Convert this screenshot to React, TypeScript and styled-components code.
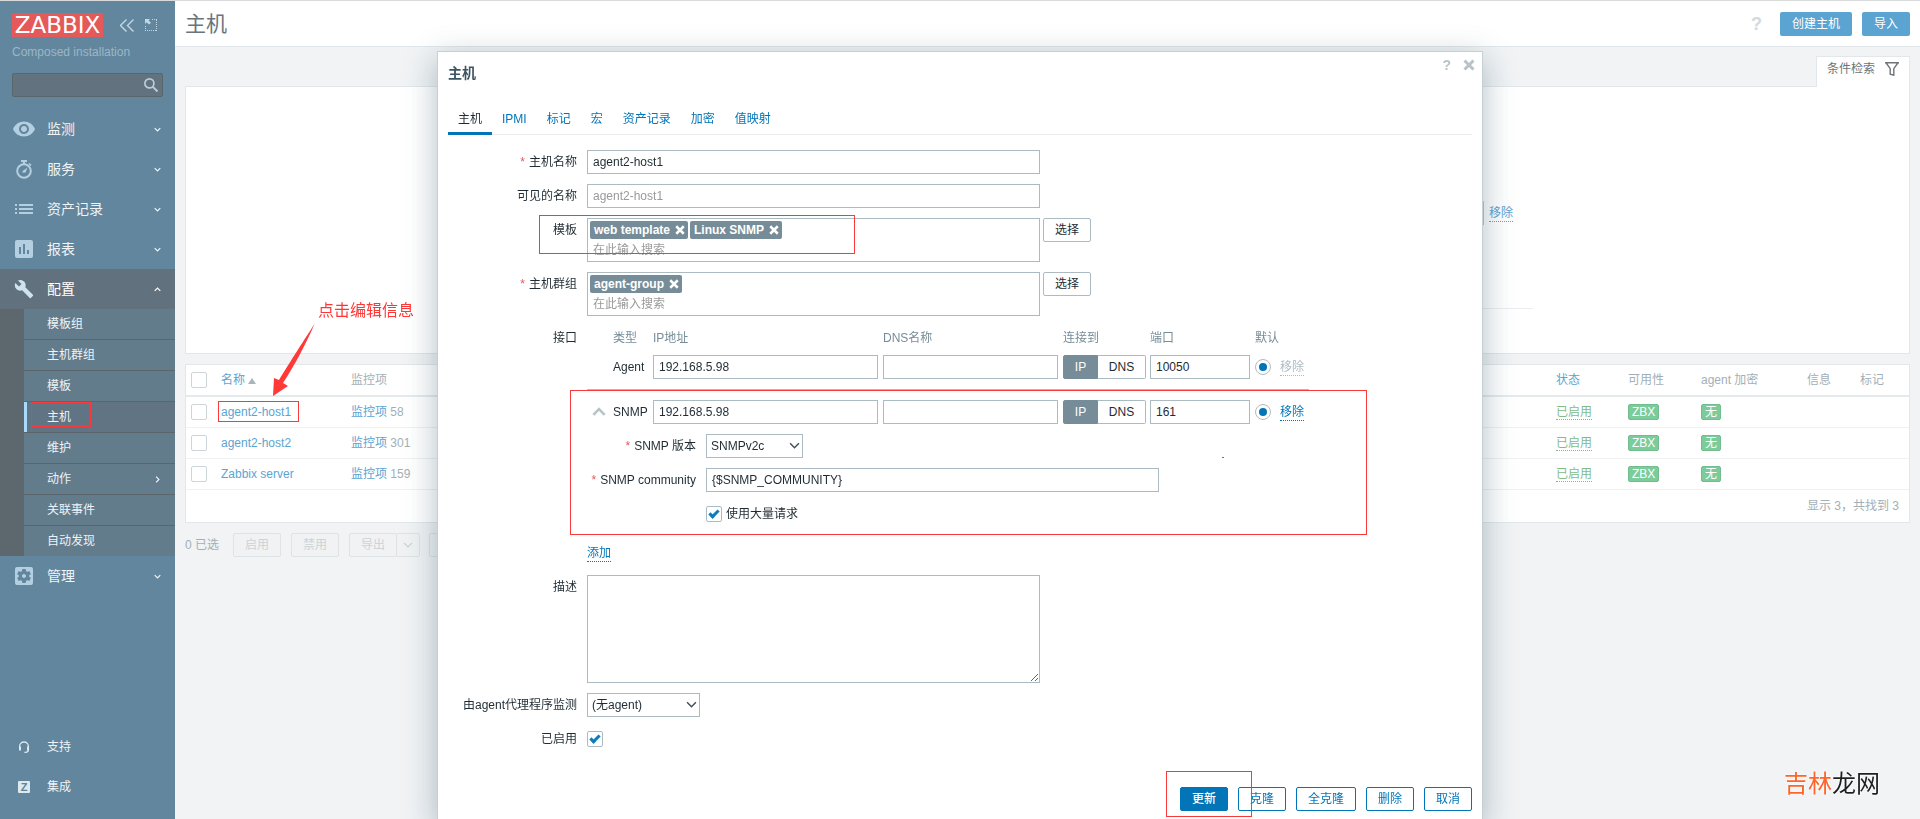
import React from "react";
import styled, { createGlobalStyle, css } from "styled-components";
import {
  MdVisibility,
  MdAssessment,
  MdBuild,
  MdSettingsApplications,
} from "react-icons/md";

const font = '"Liberation Sans", "Noto Sans CJK SC", sans-serif';

const GlobalStyle = createGlobalStyle`
  *, *::before, *::after { box-sizing: border-box; }
  body {
    margin: 0;
    overflow: hidden;
    background: #f1f3f5;
    font: 12px/16px ${font};
    color: #1f2c33;
  }
  button, input, select, textarea { font: inherit; color: inherit; margin: 0; }
  a { text-decoration: none; }
`;

/* ---------- shell and sidebar ---------- */

const Shell = styled.div`
  display: flex;
  height: 100vh;
  min-height: 640px;
  border-top: 1px solid #d9dadb;
`;

const Sidebar = styled.aside`
  display: flex;
  flex-direction: column;
  flex: none;
  width: 175px;
  padding: 12px 0;
  background: #62869d;
  color: #f0f5f8;
`;

const Brand = styled.div`
  display: flex;
  align-items: center;
  gap: 11px;
  padding: 0 18px 0 12px;
`;

const Logo = styled.a`
  flex: none;
  width: 91px;
  height: 24px;
  margin-right: 6px;
  background: #e45959;
  color: #fff;
  text-align: center;
  font: 23px/24px "DejaVu Sans", sans-serif;
`;

const IconButton = styled.button<{ $muted?: boolean }>`
  display: flex;
  padding: 0;
  border: 0;
  background: none;
  color: ${(p) => (p.$muted ? "#b7c3c9" : "#c3d7e4")};
`;

const ServerName = styled.div`
  padding: 7px 12px 13px;
  color: #9ab7c9;
`;

const SearchBox = styled.form`
  display: flex;
  align-items: center;
  height: 24px;
  margin: 0 12px 12px;
  padding-right: 4px;
  border: 1px solid #5a656c;
  border-radius: 2px;
  background: #62737f;
  color: #b8cddb;

  input {
    flex: 1;
    min-width: 0;
    border: 0;
    background: none;
    outline: 0;
  }
`;

const MenuLink = styled.a<{ $open?: boolean }>`
  display: flex;
  align-items: center;
  height: 40px;
  padding: 0 14px 0 12px;
  font-size: 14px;
  color: ${(p) => (p.$open ? "#fff" : "#eef4f8")};
  background: ${(p) => (p.$open ? "#61727e" : "none")};

  span {
    flex: 1;
  }
`;

const MenuIcon = styled.i`
  display: flex;
  justify-content: center;
  width: 24px;
  margin-right: 11px;
  color: #b4cfe1;
`;

const SubMenu = styled.ul`
  margin: 0;
  padding: 0 0 0 24px;
  list-style: none;
  background: #5c676e;
`;

const SubItem = styled.li`
  position: relative;
  background: #637c8c;

  & + & {
    border-top: 1px solid #5a656c;
  }
`;

const SubLink = styled.a<{ $active?: boolean }>`
  display: flex;
  align-items: center;
  justify-content: space-between;
  height: 30px;
  padding: 0 14px 0 20px;
  border-left: 3px solid ${(p) => (p.$active ? "#a9d9fb" : "transparent")};
  background: ${(p) => (p.$active ? "#607483" : "none")};
  color: #edf3f6;
`;

const SideFooter = styled.nav`
  margin-top: auto;
`;

const FooterLink = styled(MenuLink)`
  font-size: 12px;
`;

const ZMark = styled.b`
  width: 12px;
  height: 12px;
  border-radius: 1px;
  background: #dde8ef;
  color: #5f839b;
  text-align: center;
  font: bold 11px/12px "Liberation Sans", sans-serif;
`;

/* ---------- page behind the dialogue ---------- */

const Main = styled.main`
  flex: 1;
  min-width: 0;
`;

const PageHeader = styled.header`
  display: flex;
  align-items: center;
  height: 46px;
  padding: 0 10px;
  border-bottom: 1px solid #e1e7ea;
  background: #fff;

  h1 {
    flex: 1;
    margin: 0;
    font-weight: 400;
    font-size: 21px;
    line-height: 24px;
    color: #68757d;
  }
`;

const HelpLink = styled.a<{ $small?: boolean }>`
  font-weight: 700;
  font-size: ${(p) => (p.$small ? 14 : 18)}px;
  color: ${(p) => (p.$small ? "#b7c3c9" : "#d1d9dd")};
  margin-right: ${(p) => (p.$small ? 12 : 8)}px;
`;

const PageButton = styled.button`
  height: 24px;
  padding: 0 12px;
  margin-left: 10px;
  border: 0;
  border-radius: 2px;
  background: #5ba4d2;
  color: #fff;
`;

const Content = styled.div`
  padding: 9px 10px;
`;

const FilterTab = styled.a`
  position: relative;
  z-index: 1;
  display: flex;
  align-items: center;
  justify-content: space-between;
  width: 94px;
  height: 31px;
  margin: 0 0 -1px auto;
  padding: 0 10px 6px;
  border: 1px solid #e1e7ea;
  border-bottom: 0;
  background: #fff;
  color: #6b757b;
`;

const Panel = styled.section`
  border: 1px solid #e1e7ea;
  background: #fff;
`;

const FilterPanel = styled(Panel)`
  height: 268px;
  margin-bottom: 10px;
`;

const FilterForm = styled.div`
  display: flex;
  align-items: center;
  justify-content: flex-end;
  max-width: 971px;
  height: 222px;
  margin: 0 auto;
  padding: 31px 20px 0;
  border-bottom: 1px solid #ebeef0;

  input {
    width: 200px;
    height: 24px;
    margin-right: 5px;
    border: 1px solid #bfcad0;
  }
`;

const dotted = css`
  border-bottom: 1px dotted currentColor;
`;

const PageLink = styled.a<{ $dotted?: boolean }>`
  color: #5ba4d2;
  ${(p) => p.$dotted && dotted}
`;

const HostTable = styled.table`
  width: 100%;
  border-collapse: collapse;
  table-layout: fixed;
  color: #a3afb6;

  th,
  td {
    height: 31px;
    padding: 0 5px;
    text-align: left;
    font-weight: 400;
    border-bottom: 1px solid #eff1f3;
  }
  th {
    border-bottom: 2px solid #e5eaed;
  }
  tfoot td {
    height: 33px;
    text-align: right;
    padding-right: 10px;
    border: 0;
  }
`;

const Col = styled.col<{ $w?: number }>`
  width: ${(p) => (p.$w ? `${p.$w}px` : "auto")};
`;

const SortArrow = styled.i`
  display: inline-block;
  margin-left: 3px;
  border: 4px solid transparent;
  border-top: 0;
  border-bottom: 6px solid #a9b5bc;
`;

const StatusLink = styled.a`
  color: #83bb86;
  ${dotted}
`;

const Badge = styled.span`
  display: inline-block;
  height: 16px;
  padding: 0 3px;
  border: 1px solid #72bd8e;
  border-radius: 2px;
  background: #7ccb9a;
  color: #fff;
  line-height: 14px;
`;

const ActionBar = styled.div`
  display: flex;
  align-items: center;
  margin-top: 10px;
  color: #a3afb6;

  span {
    width: 48px;
  }
`;

const ActionButton = styled.button<{ $joined?: boolean }>`
  display: flex;
  align-items: center;
  height: 24px;
  padding: 0 ${(p) => (p.$joined ? 6 : 11)}px;
  margin-right: ${(p) => (p.$joined ? 9 : 10)}px;
  margin-left: ${(p) => (p.$joined ? -11 : 0)}px;
  border: 1px solid #dde3e6;
  border-radius: 2px;
  background: #f0f2f3;

  &:disabled {
    color: #ccd4d8;
  }
`;

const Watermark = styled.div`
  position: fixed;
  right: 40px;
  bottom: 19px;
  font-size: 24px;
  line-height: 32px;
  color: #1f1f1f;
  text-shadow: 0 0 2px #fff, 0 0 2px #fff;

  b {
    font-weight: 400;
    color: #ff6428;
  }
`;

/* ---------- form controls ---------- */

const Tick = styled.input.attrs({ type: "checkbox" })<{ $pale?: boolean }>`
  appearance: none;
  position: relative;
  display: block;
  flex: none;
  width: 16px;
  height: 16px;
  border: 1px solid ${(p) => (p.$pale ? "#ccd5da" : "#acbbc2")};
  border-radius: 2px;
  background: #fff;

  &:checked::after {
    content: "";
    position: absolute;
    left: 2px;
    top: 3px;
    width: 10px;
    height: 6px;
    border: solid #0f7cbd;
    border-width: 0 0 3px 3px;
    transform: rotate(-45deg);
  }
`;

const Radio = styled.input.attrs({ type: "radio" })`
  appearance: none;
  display: flex;
  align-items: center;
  justify-content: center;
  width: 16px;
  height: 16px;
  border: 1px solid #acbbc2;
  border-radius: 50%;
  background: #fff;

  &:checked::before {
    content: "";
    width: 8px;
    height: 8px;
    border-radius: 50%;
    background: #0275b8;
  }
`;

const TextInput = styled.input<{ $w?: number }>`
  width: ${(p) => p.$w ?? 453}px;
  height: 24px;
  padding: 0 5px;
  border: 1px solid #acbbc2;
  background: #fff;
  outline: 0;

  &::placeholder {
    color: #9a9a9a;
  }
`;

const TextArea = styled.textarea`
  display: block;
  width: 453px;
  height: 108px;
  border: 1px solid #acbbc2;
`;

const SelectWrap = styled.span<{ $w: number }>`
  position: relative;
  display: block;
  width: ${(p) => p.$w}px;

  select {
    appearance: none;
    display: block;
    width: 100%;
    height: 24px;
    padding: 0 4px;
    border: 1px solid #acbbc2;
    border-radius: 0;
    background: #fff;
  }
  svg {
    position: absolute;
    right: 3px;
    top: 6px;
    color: #3f4d55;
    pointer-events: none;
  }
`;

const Button = styled.button<{ $kind?: "primary" | "outline" }>`
  height: 24px;
  padding: 0 11px;
  border: 1px solid ${(p) => (p.$kind ? "#0275b8" : "#acbbc2")};
  border-radius: 2px;
  background: ${(p) => (p.$kind === "primary" ? "#0275b8" : "#fff")};
  color: ${(p) =>
    p.$kind === "primary" ? "#fff" : p.$kind ? "#0275b8" : "#1f2c33"};
  font-weight: ${(p) => (p.$kind === "primary" ? 500 : 400)};
`;

const TextButton = styled.button`
  padding: 1px 0 0;
  border: 0;
  background: none;
  line-height: 15px;
  color: #0275b8;
  ${dotted}

  &:disabled {
    color: #acbbc2;
  }
`;

/* ---------- host dialogue ---------- */

const Overlay = styled.div`
  position: fixed;
  inset: 0;
  display: flex;
  justify-content: center;
  align-items: flex-start;
  padding-top: 51px;
  overflow: hidden;
`;

const Dialog = styled.section`
  position: relative;
  width: 1046px;
  padding: 13px 10px 10px;
  border: 1px solid #c5d0d5;
  background: #fff;
  box-shadow: 0 8px 30px rgba(40, 75, 92, 0.36);

  h2 {
    margin: 0;
    font-weight: 700;
    font-size: 14px;
    line-height: 16px;
    color: #3c5563;
  }
`;

const DialogTools = styled.div`
  position: absolute;
  top: 5px;
  right: 7px;
  display: flex;
  align-items: center;
`;

const Tabs = styled.nav`
  display: flex;
  margin: 24px 0 15px;
  border-bottom: 1px solid #ebeef0;
`;

const Tab = styled.a<{ $active?: boolean }>`
  height: 30px;
  margin-bottom: -1px;
  padding: 6px 10px 0;
  border-bottom: 3px solid ${(p) => (p.$active ? "#0275b8" : "transparent")};
  color: ${(p) => (p.$active ? "#1f2c33" : "#0275b8")};
`;

const FormGrid = styled.form`
  display: grid;
  grid-template-columns: 129px 1fr;
  gap: 10px;
`;

const Label = styled.label<{ $required?: boolean }>`
  line-height: 24px;
  text-align: right;

  ${(p) =>
    p.$required &&
    css`
      &::before {
        content: "*";
        margin-right: 4px;
        color: #e45959;
      }
    `}
`;

const FieldRow = styled.div`
  position: relative;
  display: flex;
  align-items: flex-start;
  gap: 3px;
`;

const CheckRow = styled.div`
  display: flex;
  align-items: center;
  gap: 4px;
  height: 24px;
`;

const MultiSelect = styled.div`
  width: 453px;
  height: 44px;
  padding: 2px;
  border: 1px solid #acbbc2;

  input {
    display: block;
    width: 100%;
    height: 20px;
    padding: 2px 3px 0;
    border: 0;
    outline: 0;
  }
  input::placeholder {
    color: #9a9a9a;
  }
`;

const Chips = styled.div`
  display: flex;
  gap: 2px;
`;

const Chip = styled.span`
  display: flex;
  align-items: center;
  gap: 5px;
  height: 18px;
  padding: 0 3px 0 4px;
  border-radius: 2px;
  background: #768d99;
  color: #fff;
  font-weight: 700;

  button {
    display: flex;
    padding: 0;
    border: 0;
    background: none;
  }
`;

const InterfaceRow = styled.div<{ $head?: boolean }>`
  display: grid;
  grid-template-columns: 26px 40px 230px 180px 87px 105px 25px auto;
  align-items: center;
  justify-content: start;
  width: 722px;
  height: 24px;
  white-space: nowrap;
  ${(p) =>
    p.$head &&
    css`
      margin-bottom: 5px;
      color: #768d99;
    `}
`;

const Expander = styled.button`
  display: flex;
  padding: 0;
  margin-left: 5px;
  border: 0;
  background: none;
  color: #b7c3c9;
`;

const Segmented = styled.div`
  display: flex;
  width: 83px;

  button {
    height: 24px;
    padding: 0;
    border: 1px solid #acbbc2;
  }
  button:first-child {
    width: 35px;
    border-color: #768d99;
    border-radius: 2px 0 0 2px;
    background: #768d99;
    color: #fff;
  }
  button:last-child {
    flex: 1;
    border-left: 0;
    border-radius: 0 2px 2px 0;
    background: #fff;
  }
`;

const SnmpBlock = styled.div`
  position: relative;
  width: 722px;
  margin-top: 10px;
  padding: 10px 0 15px;
  border-top: 1px solid #acbbc2;
`;

const SnmpGrid = styled.div`
  display: grid;
  grid-template-columns: 109px 1fr;
  gap: 10px;
  margin-top: 10px;
`;

const AddRow = styled.div`
  display: flex;
  align-items: center;
  height: 24px;
`;

const DialogFooter = styled.footer`
  display: flex;
  justify-content: flex-end;
  gap: 10px;
  margin-top: 36px;
`;

/* ---------- annotations ---------- */

const Marker = styled.span<{ $inset: string }>`
  position: absolute;
  inset: ${(p) => p.$inset};
  border: 1px solid #f93a3a;
  pointer-events: none;
`;

const Anchor = styled.span`
  position: relative;
`;

const RedDot = styled.i`
  position: absolute;
  left: 635px;
  top: 67px;
  width: 2px;
  height: 1px;
  background: #f93a3a;
`;

const Note = styled.div`
  position: fixed;
  left: 273px;
  top: 300px;
  padding-left: 45px;
  font-size: 16px;
  line-height: 22px;
  color: #ff3636;

  svg {
    position: absolute;
    left: 0;
    top: 24px;
  }
`;

/* ---------- small drawings ---------- */

type ChevronProps = { dir?: "down" | "up" | "right"; size?: number; stroke?: number };

const Chevron = ({ dir = "down", size = 7, stroke = 1.2 }: ChevronProps) => {
  const d = { down: "M1 3l4 4 4-4", up: "M1 7l4-4 4 4", right: "M3 1l4 4-4 4" }[dir];
  return (
    <svg width={size} height={size} viewBox="0 0 10 10" overflow="visible" aria-hidden="true">
      <path d={d} fill="none" stroke="currentColor" strokeWidth={(stroke * 10) / size} />
    </svg>
  );
};

const Cross = ({ size = 8 }: { size?: number }) => (
  <svg width={size} height={size} viewBox="0 0 8 8" aria-hidden="true">
    <path d="M1 1l6 6M7 1l-6 6" stroke="currentColor" strokeWidth="2" />
  </svg>
);

const Stopwatch = () => (
  <svg width="18" height="20" viewBox="0 0 18 20" fill="none" stroke="currentColor">
    <circle cx="9" cy="12" r="6.8" strokeWidth="2" />
    <path d="M6 2h6M9 2v3" strokeWidth="2.2" />
    <path d="M14 4.5l2 2" strokeWidth="1.6" />
    <path d="M12.5 8.5l-2 5-2.6.3-.6-1.6z" fill="currentColor" stroke="none" />
  </svg>
);

const ListIcon = () => (
  <svg width="18" height="10" viewBox="0 0 18 10" fill="currentColor">
    <path d="M0 0h2v2H0zM4 0h14v2H4zM0 4h2v2H0zM4 4h14v2H4zM0 8h2v2H0zM4 8h14v2H4z" />
  </svg>
);

const Headset = () => (
  <svg width="12" height="12" viewBox="0 0 12 12" fill="none" stroke="#dde8ef">
    <path d="M1.6 7V5.4a4.4 4.4 0 018.800 0V7" strokeWidth="1.3" />
    <path d="M2 5.5v4M10 5.5v4" strokeWidth="2" />
    <path d="M10.4 9c0 1.6-1.4 2.4-4 2.4" strokeWidth="1.3" />
  </svg>
);

/* ---------- data ---------- */

const upperMenu = [
  { label: "监测", icon: <MdVisibility size={24} /> },
  { label: "服务", icon: <Stopwatch /> },
  { label: "资产记录", icon: <ListIcon /> },
  { label: "报表", icon: <MdAssessment size={24} /> },
];

const configMenu = ["模板组", "主机群组", "模板", "主机", "维护", "动作", "关联事件", "自动发现"];

const hosts = [
  { name: "agent2-host1", items: 58 },
  { name: "agent2-host2", items: 301 },
  { name: "Zabbix server", items: 159 },
];

const tabs = ["主机", "IPMI", "标记", "宏", "资产记录", "加密", "值映射"];

const InterfaceFields = ({ type, port, locked }: { type: string; port: string; locked?: boolean }) => (
  <InterfaceRow>
    {locked ? (
      <span />
    ) : (
      <Expander type="button" aria-label="收起">
        <Chevron dir="up" size={14} stroke={2.6} />
      </Expander>
    )}
    <span>{type}</span>
    <TextInput $w={225} defaultValue="192.168.5.98" aria-label={`${type} IP地址`} />
    <TextInput $w={175} aria-label={`${type} DNS名称`} />
    <Segmented>
      <button type="button">IP</button>
      <button type="button">DNS</button>
    </Segmented>
    <TextInput $w={100} defaultValue={port} aria-label={`${type} 端口`} />
    <Radio name={`default-${type}`} defaultChecked aria-label={`${type} 默认`} />
    <TextButton type="button" disabled={locked}>移除</TextButton>
  </InterfaceRow>
);

const Chosen = ({ id, names }: { id: string; names: string[] }) => (
  <MultiSelect>
    <Chips>
      {names.map((name) => (
        <Chip key={name}>
          {name}
          <button type="button" aria-label="移除">
            <Cross size={10} />
          </button>
        </Chip>
      ))}
    </Chips>
    <input id={id} placeholder="在此输入搜索" />
  </MultiSelect>
);

export default function App() {
  return (
    <>
      <GlobalStyle />
      <Shell>
        <Sidebar>
          <Brand>
            <Logo href="#">ZABBIX</Logo>
            <IconButton aria-label="收起侧栏">
              <svg width="14" height="13" viewBox="0 0 14 13" fill="none" stroke="currentColor" strokeWidth="1.4">
                <path d="M6.5.5l-6 6 6 6M13.5.5l-6 6 6 6" />
              </svg>
            </IconButton>
            <IconButton aria-label="隐藏侧栏">
              <svg width="12" height="12" viewBox="0 0 12 12" fill="none" stroke="currentColor">
                <path d="M7 .5h5M11.5 1v11M.5 7v5M0 11.5h12" strokeDasharray="1 1" />
                <path d="M0 0h5L3.6 1.4 6 3.8 4 5.6 1.5 3.3 0 5z" fill="currentColor" stroke="none" />
              </svg>
            </IconButton>
          </Brand>
          <ServerName>Composed installation</ServerName>
          <SearchBox>
            <input aria-label="搜索" />
            <svg width="14" height="14" viewBox="0 0 14 14" fill="none" stroke="currentColor" strokeWidth="1.7">
              <circle cx="5.4" cy="5.4" r="4.5" />
              <path d="M8.6 8.6l4.9 4.9" strokeWidth="2" />
            </svg>
          </SearchBox>
          <nav>
            {upperMenu.map((m) => (
              <MenuLink key={m.label} href="#">
                <MenuIcon>{m.icon}</MenuIcon>
                <span>{m.label}</span>
                <Chevron />
              </MenuLink>
            ))}
            <MenuLink href="#" $open>
              <MenuIcon>
                <MdBuild size={20} color="#cfe2ef" />
              </MenuIcon>
              <span>配置</span>
              <Chevron dir="up" />
            </MenuLink>
            <SubMenu>
              {configMenu.map((label) => (
                <SubItem key={label}>
                  <SubLink href="#" $active={label === "主机"}>
                    {label}
                    {label === "动作" && <Chevron dir="right" />}
                  </SubLink>
                  {label === "主机" && <Marker $inset="0 84px 5px 7px" />}
                </SubItem>
              ))}
            </SubMenu>
            <MenuLink href="#">
              <MenuIcon>
                <MdSettingsApplications size={24} />
              </MenuIcon>
              <span>管理</span>
              <Chevron />
            </MenuLink>
          </nav>
          <SideFooter>
            <FooterLink href="#">
              <MenuIcon>
                <Headset />
              </MenuIcon>
              <span>支持</span>
            </FooterLink>
            <FooterLink href="#">
              <MenuIcon>
                <ZMark>Z</ZMark>
              </MenuIcon>
              <span>集成</span>
            </FooterLink>
          </SideFooter>
        </Sidebar>

        <Main>
          <PageHeader>
            <h1>主机</h1>
            <HelpLink href="#">?</HelpLink>
            <PageButton>创建主机</PageButton>
            <PageButton>导入</PageButton>
          </PageHeader>
          <Content>
            <FilterTab href="#">
              条件检索
              <svg width="14" height="14" viewBox="0 0 14 14" fill="none" stroke="currentColor" strokeWidth="1.4">
                <path d="M0 .8h14M1.2 1l4 5.600v5.600l3.600 1V6.600l4-5.600" />
              </svg>
            </FilterTab>
            <FilterPanel>
              <FilterForm>
                <input aria-label="标记值" />
                <PageLink href="#" $dotted>移除</PageLink>
              </FilterForm>
            </FilterPanel>
            <Panel>
              <HostTable>
                <colgroup>
                  <Col $w={30} />
                  <Col $w={130} />
                  <Col />
                  <Col $w={72} />
                  <Col $w={73} />
                  <Col $w={106} />
                  <Col $w={53} />
                  <Col $w={54} />
                </colgroup>
                <thead>
                  <tr>
                    <th><Tick $pale aria-label="全选" /></th>
                    <th><PageLink href="#">名称</PageLink><SortArrow /></th>
                    <th>监控项</th>
                    <th><PageLink href="#">状态</PageLink></th>
                    <th>可用性</th>
                    <th>agent 加密</th>
                    <th>信息</th>
                    <th>标记</th>
                  </tr>
                </thead>
                <tbody>
                  {hosts.map((h, i) => (
                    <tr key={h.name}>
                      <td><Tick $pale aria-label={h.name} /></td>
                      <td>
                        <Anchor>
                          <PageLink href="#">{h.name}</PageLink>
                          {i === 0 && <Marker $inset="-4px -8px -3px -3px" />}
                        </Anchor>
                      </td>
                      <td><PageLink href="#">监控项</PageLink> {h.items}</td>
                      <td><StatusLink href="#">已启用</StatusLink></td>
                      <td><Badge>ZBX</Badge></td>
                      <td><Badge>无</Badge></td>
                      <td />
                      <td />
                    </tr>
                  ))}
                </tbody>
                <tfoot>
                  <tr>
                    <td colSpan={8}>显示 3，共找到 3</td>
                  </tr>
                </tfoot>
              </HostTable>
            </Panel>
            <ActionBar>
              <span>0 已选</span>
              <ActionButton disabled>启用</ActionButton>
              <ActionButton disabled>禁用</ActionButton>
              <ActionButton disabled>导出</ActionButton>
              <ActionButton disabled $joined aria-label="导出格式">
                <Chevron size={10} />
              </ActionButton>
              <ActionButton disabled>批量更新</ActionButton>
            </ActionBar>
          </Content>
        </Main>
      </Shell>

      <Watermark><b>吉林</b>龙网</Watermark>

      <Overlay>
        <Dialog role="dialog" aria-label="主机">
          <DialogTools>
            <HelpLink href="#" $small>?</HelpLink>
            <IconButton $muted aria-label="关闭">
              <Cross size={12} />
            </IconButton>
          </DialogTools>
          <h2>主机</h2>
          <Tabs>
            {tabs.map((t, i) => (
              <Tab key={t} href="#" $active={i === 0}>{t}</Tab>
            ))}
          </Tabs>

          <FormGrid>
            <Label $required htmlFor="host">主机名称</Label>
            <FieldRow><TextInput id="host" defaultValue="agent2-host1" /></FieldRow>

            <Label htmlFor="visible">可见的名称</Label>
            <FieldRow><TextInput id="visible" placeholder="agent2-host1" /></FieldRow>

            <Label htmlFor="templates">模板</Label>
            <FieldRow>
              <Chosen id="templates" names={["web template", "Linux SNMP"]} />
              <Button type="button">选择</Button>
              <Marker $inset="-3px 617px 8px -48px" />
            </FieldRow>

            <Label $required htmlFor="groups">主机群组</Label>
            <FieldRow>
              <Chosen id="groups" names={["agent-group"]} />
              <Button type="button">选择</Button>
            </FieldRow>

            <Label as="span">接口</Label>
            <div>
              <InterfaceRow $head>
                <span />
                <span>类型</span>
                <span>IP地址</span>
                <span>DNS名称</span>
                <span>连接到</span>
                <span>端口</span>
                <span>默认</span>
              </InterfaceRow>
              <InterfaceFields type="Agent" port="10050" locked />
              <SnmpBlock>
                <InterfaceFields type="SNMP" port="161" />
                <SnmpGrid>
                  <Label $required htmlFor="version">SNMP 版本</Label>
                  <SelectWrap $w={97}>
                    <select id="version"><option>SNMPv2c</option></select>
                    <Chevron size={11} stroke={1.4} />
                  </SelectWrap>
                  <Label $required htmlFor="community">SNMP community</Label>
                  <TextInput id="community" defaultValue="{$SNMP_COMMUNITY}" />
                  <span />
                  <CheckRow>
                    <Tick id="bulk" defaultChecked />
                    <label htmlFor="bulk">使用大量请求</label>
                  </CheckRow>
                </SnmpGrid>
                <Marker $inset="0 -58px 6px -17px" />
                <RedDot />
              </SnmpBlock>
              <AddRow><TextButton type="button">添加</TextButton></AddRow>
            </div>

            <Label htmlFor="description">描述</Label>
            <TextArea id="description" />

            <Label htmlFor="proxy">由agent代理程序监测</Label>
            <SelectWrap $w={113}>
              <select id="proxy"><option>(无agent)</option></select>
              <Chevron size={11} stroke={1.4} />
            </SelectWrap>

            <Label htmlFor="enabled">已启用</Label>
            <CheckRow><Tick id="enabled" defaultChecked /></CheckRow>
          </FormGrid>

          <DialogFooter>
            <Anchor>
              <Button $kind="primary">更新</Button>
              <Marker $inset="-16px -24px -6px -14px" />
            </Anchor>
            <Button $kind="outline">克隆</Button>
            <Button $kind="outline">全克隆</Button>
            <Button $kind="outline">删除</Button>
            <Button $kind="outline">取消</Button>
          </DialogFooter>
        </Dialog>
      </Overlay>

      <Note>
        点击编辑信息
        <svg width="42" height="72" viewBox="0 0 42 72" fill="#ff3838">
          <path d="M41.500 0C33 13 17 38 6 56L1 54 0 72 15 62 10 59C20 44 33 20 41.500 0z" />
        </svg>
      </Note>
    </>
  );
}
